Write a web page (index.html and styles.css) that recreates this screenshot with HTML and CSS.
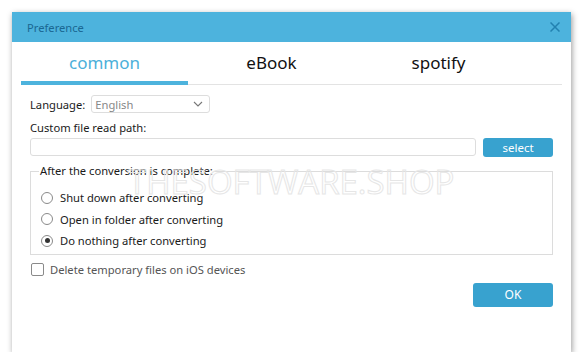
FILE: index.html
```html
<!DOCTYPE html>
<html lang="en">
<head>
    <meta charset="UTF-8">
    <meta name="viewport" content="width=device-width, initial-scale=1.0">
    <title>Preference</title>
    <link rel="stylesheet" href="styles.css">
</head>
<body>

    <div class="window">
        <div class="titlebar">
            <span class="title">Preference</span>
            <svg class="close" width="10" height="10" viewBox="0 0 10 10">
                <path d="M0.5 0.5 L9.5 9.5 M9.5 0.5 L0.5 9.5" stroke="#2381b0" stroke-width="1.5" fill="none"/>
            </svg>
        </div>

        <div class="tabs">
            <div class="tab active">common</div>
            <div class="tab">eBook</div>
            <div class="tab">spotify</div>
        </div>

        <div class="content">
            <div class="lang-row">
                <label>Language:</label>
                <div class="select">
                    <span>English</span>
                    <svg width="10" height="6" viewBox="0 0 10 6">
                        <path d="M1 1 L5 5 L9 1" stroke="#777" stroke-width="1.1" fill="none"/>
                    </svg>
                </div>
            </div>

            <div class="path-label">Custom file read path:</div>
            <div class="path-row">
                <div class="path-input"></div>
                <button class="btn btn-select">select</button>
            </div>

            <fieldset class="group">
                <legend>After the conversion is complete:</legend>
                <div class="radio"><span class="dot"></span>Shut down after converting</div>
                <div class="radio"><span class="dot"></span>Open in folder after converting</div>
                <div class="radio checked"><span class="dot"></span>Do nothing after converting</div>
            </fieldset>

            <div class="check"><span class="box"></span>Delete temporary files on iOS devices</div>

            <div class="footer">
                <button class="btn btn-ok">OK</button>
            </div>
        </div>

        <div class="watermark">THESOFTWARE.SHOP</div>
    </div>

</body>
</html>
```

FILE: styles.css
```css
body {
    margin: 0;
    background: #ffffff;
    font-family: "Noto Sans", "Open Sans", sans-serif;
    font-size: 11.2px;
    color: #1a1a1a;
}
.window {
    position: relative;
    margin: 12px 0 0 12px;
    width: 559px;
    height: 340px;
    background: #fff;
    box-shadow: 1px 2px 6px rgba(0, 0, 0, 0.4);
}
.titlebar {
    height: 30px;
    background: #4db3dd;
    display: flex;
    align-items: center;
    justify-content: space-between;
    padding: 0 11px 0 15px;
}
.title {
    color: #1a6792;
    font-size: 11.2px;
}
.tabs {
    display: flex;
    margin: 0 9px 0 9px;
    border-bottom: 1px solid #e3e3e3;
    height: 43px;
    box-sizing: border-box;
}
.tab {
    width: 167px;
    text-align: center;
    font-size: 17px;
    line-height: 41px;
    color: #111;
}
.tab.active {
    color: #4cb0da;
    border-bottom: 4px solid #4db3dd;
    height: 43px;
    box-sizing: border-box;
}
.content {
    padding: 10px 18px 0 18px;
}
.lang-row {
    display: flex;
    align-items: center;
    gap: 6px;
    height: 18px;
}
.select {
    width: 108px;
    height: 16px;
    border: 1px solid #ddd;
    border-radius: 3px;
    display: flex;
    align-items: center;
    justify-content: space-between;
    padding: 0 6px 0 3px;
    color: #888;
}
.path-label {
    margin-top: 6px;
    line-height: 18px;
}
.path-row {
    display: flex;
    gap: 7px;
    margin-top: 1px;
}
.path-input {
    flex: 1;
    height: 16px;
    border: 1px solid #ddd;
    border-radius: 3px;
}
.btn {
    border: none;
    border-radius: 3px;
    background: #38a2cf;
    color: #fff;
    font-family: inherit;
    font-size: 11.5px;
    padding: 0;
}
.btn-select {
    width: 70px;
    height: 19px;
}
.group {
    margin: 7px 0 0 0;
    border: 1px solid #dcdcdc;
    padding: 9px 0 2px 10px;
}
.group legend {
    padding: 0 1px;
    margin-left: -2px;
    line-height: 14px;
}
.radio {
    display: flex;
    align-items: center;
    height: 21.5px;
}
.dot {
    width: 12px;
    height: 12px;
    border: 1px solid #8a8a8a;
    border-radius: 50%;
    margin-right: 7px;
    box-sizing: border-box;
    display: flex;
    align-items: center;
    justify-content: center;
}
.radio.checked .dot::after {
    content: "";
    width: 5px;
    height: 5px;
    border-radius: 50%;
    background: #333;
}
.check {
    display: flex;
    align-items: center;
    margin-top: 7px;
    height: 16px;
    color: #555;
}
.box {
    width: 13px;
    height: 13px;
    border: 1px solid #8a8a8a;
    border-radius: 2px;
    box-sizing: border-box;
    margin: 0 6px 0 1px;
}
.footer {
    display: flex;
    justify-content: flex-end;
    margin-top: 5px;
}
.btn-ok {
    width: 80px;
    height: 24px;
    font-size: 12px;
}
.watermark {
    position: absolute;
    left: 116px;
    top: 153px;
    font-family: "Open Sans", sans-serif;
    font-size: 33px;
    line-height: 33px;
    color: transparent;
    -webkit-text-stroke: 1px #e6e6e6;
    pointer-events: none;
}
```
